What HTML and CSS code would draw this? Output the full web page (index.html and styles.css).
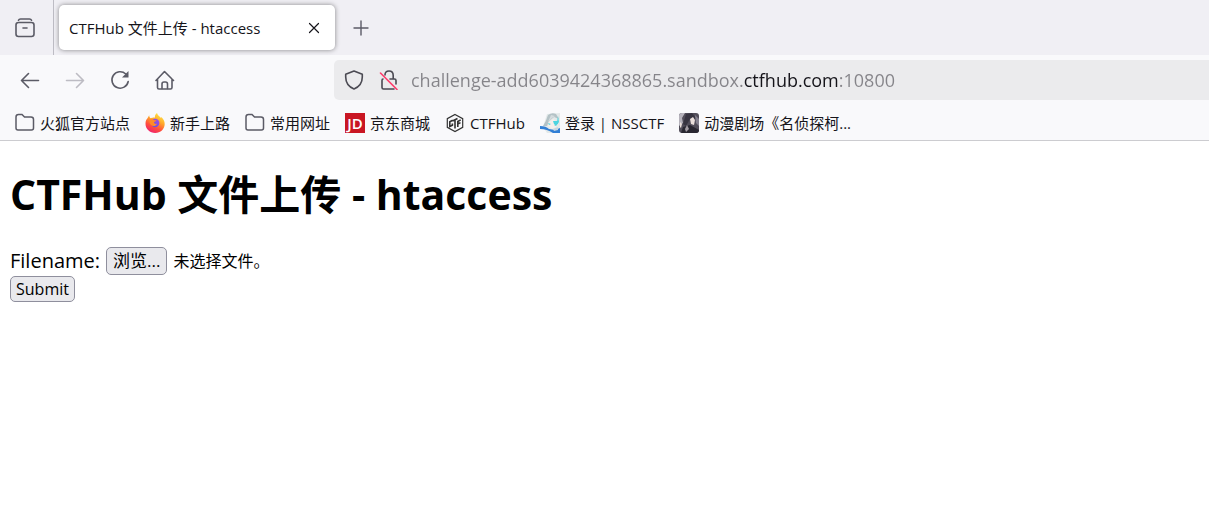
FILE: index.html
```html
<!DOCTYPE html>
<html lang="zh-CN">
<head>
<meta charset="utf-8">
<title>CTFHub 文件上传 - htaccess</title>
<link rel="stylesheet" href="styles.css">
</head>
<body>
<header class="browser">
  <div class="tabstrip">
    <div class="tabview">
      <button class="icon-btn" aria-label="Firefox View">
        <svg class="icon" viewBox="0 0 20 20"><path d="M3.500 2.200Q4 1 5.500 1h9q1.500 0 2 1.200"/><rect x="1" y="4.500" width="18" height="14" rx="2.500"/><path d="M8 10h4"/></svg>
      </button>
    </div>
    <div class="tab">
      <span class="tab-title">CTFHub 文件上传 - htaccess</span>
      <button class="icon-btn tab-close" aria-label="关闭标签页">
        <svg class="icon icon-close" viewBox="0 0 12 12"><path d="M1.500 1.500l9 9M10.500 1.500l-9 9"/></svg>
      </button>
    </div>
    <button class="icon-btn new-tab" aria-label="新建标签页">
      <svg class="icon icon-plus" viewBox="0 0 16 16"><path d="M8 1v14M1 8h14"/></svg>
    </button>
  </div>

  <nav class="toolbar">
    <div class="nav-buttons">
      <button class="icon-btn" aria-label="后退"><svg class="icon" viewBox="0 0 20 20"><path d="M18.500 10.500h-17M8.500 3.500l-7 7 7 7"/></svg></button>
      <button class="icon-btn" aria-label="前进" disabled><svg class="icon" viewBox="0 0 20 20"><path d="M1.500 10.500h17M11.500 3.500l7 7-7 7"/></svg></button>
      <button class="icon-btn" aria-label="刷新"><svg class="icon" viewBox="0 0 20 20"><path d="M18.200 11.500A8.200 8.200 0 1 1 15.800 4"/><path class="solid" d="M18.500 1v6.500H12z"/></svg></button>
      <button class="icon-btn" aria-label="主页"><svg class="icon" viewBox="0 0 20 20"><path d="M1 10.500L9.500 1.500l9 9M2.500 9v8.500q0 1.500 1.500 1.500h11.500q1.500 0 1.500-1.500V9"/><path d="M7 18.500V14q0-2 2-2h1.500q2 0 2 2v4.500"/></svg></button>
    </div>
    <div class="urlbar">
      <svg class="icon" viewBox="0 0 20 20"><path d="M10 1l8.300 3.200V7c0 5.500-3.500 10-8.300 12C5.200 17 1.700 12.500 1.700 7V4.200z"/></svg>
      <svg class="icon" viewBox="0 0 20 20"><path d="M6 5q0-4 4-4 4.200 0 4.200 4.500V9M11 9h4.500Q17 9 17 10.500V14M4 9q-1 0-1 1.500v7Q3 19 4.500 19H15"/><path class="strike" d="M1.500 3l16.500 16.500"/></svg>
      <input class="url" type="text" aria-label="地址" spellcheck="false" value="challenge-add6039424368865.sandbox.ctfhub.com:10800">
    </div>
  </nav>

  <nav class="bookmarks">
    <a class="bookmark" href="#"><svg class="favicon" viewBox="0 0 20 20"><path class="folder" d="M1 15V4Q1 1.500 3.500 1.500H7L9.500 4h6.500q2.500 0 2.500 2.500V15q0 2-2 2H3q-2 0-2-2z"/></svg>火狐官方站点</a>
    <a class="bookmark" href="#"><svg class="favicon" viewBox="0 0 20 20">
      <defs>
        <linearGradient id="flame" x1=".8" y1="0" x2=".3" y2="1"><stop offset="0" stop-color="#fff04a"/><stop offset=".4" stop-color="#ffa52a"/><stop offset=".7" stop-color="#ff4f3c"/><stop offset="1" stop-color="#ef206f"/></linearGradient>
        <linearGradient id="globe" x1="1" y1="0" x2="0" y2="1"><stop offset="0" stop-color="#a34bea"/><stop offset="1" stop-color="#5956d8"/></linearGradient>
      </defs>
      <path fill="url(#flame)" d="M4.200 2.200C4.200 4 5 5 6 5.200 8 4.200 9 4.500 10 4.500c-.5-1.500.5-3.500 2-4.500.5 2.500 2.500 3 4 5l.5-1c2 2.500 3.200 4 3.200 7 0 5-4.200 9-9.500 9S.5 16 .5 10.800C.5 8 1.500 6 2.300 5.500z"/>
      <circle cx="10.200" cy="10" r="4.200" fill="url(#globe)"/>
      <path fill="#ff8b27" d="M5 6.500c2-.8 3-.2 4.500.8h2c-.3 1.200-1.800 1.200-2.500 2 .2 1.700 2 1.900 3 1.200-.5 2.500-4 3.500-6 1.500C4.500 10.500 4 8 5 6.500z"/>
    </svg>新手上路</a>
    <a class="bookmark" href="#"><svg class="favicon" viewBox="0 0 20 20"><path class="folder" d="M1 15V4Q1 1.500 3.500 1.500H7L9.500 4h6.500q2.500 0 2.500 2.500V15q0 2-2 2H3q-2 0-2-2z"/></svg>常用网址</a>
    <a class="bookmark" href="#"><svg class="favicon" viewBox="0 0 20 20"><rect width="20" height="20" fill="#c91623"/><text class="jd" x="10" y="16" text-anchor="middle">JD</text></svg>京东商城</a>
    <a class="bookmark" href="#"><svg class="favicon" viewBox="0 0 20 20"><path class="hex" d="M10 1.500l7.700 4.200v8.600L10 18.500l-7.700-4.200V5.700z"/><path class="hex-mark" d="M7.700 7.200L4.800 8.800v4.700l2.600-1.300v-1.700M7.500 8l5-2.500M10 7v8.500M12.800 14V8.500l2.900-1.600M12.800 11l2.700-1.400"/></svg>CTFHub</a>
    <a class="bookmark" href="#"><svg class="favicon" viewBox="0 0 20 20">
      <path fill="#e3e9e9" d="M7 1l13-1v20H7l-4-6z"/>
      <path fill="#b4c2c6" d="M8 2Q12-1 16 1l3 5-5-2-5 4-2 5H3q3-4 5-11z"/>
      <path fill="#d5dcde" d="M11 2l4 1-3 2-4 4z"/>
      <path fill="#f6eeea" d="M8 10l5-4 4 3-1 5-4 2-4-3z"/>
      <path fill="#4cd4e0" d="M18 3l1 6-3 4-2-1 3-3zM13 8h5v3h-4zM8 10l3 1-2 1z"/>
      <path fill="#327fd5" d="M0 13q6 0 9 3l6 1 5-2v5h-7Q7 16 0 16z"/>
      <path fill="#c8d5df" d="M13 16l5-2v3l-4 1z"/>
    </svg>登录 | NSSCTF</a>
    <a class="bookmark" href="#"><svg class="favicon favicon-round" viewBox="0 0 20 20">
      <rect width="20" height="20" fill="#514d59"/>
      <path fill="#b5b2bb" d="M0 0h6L3 5l1 5-4 3z"/>
      <path fill="#373440" d="M7 1l6-1 4 5-2 4-4-3-4 7-3-2z"/>
      <path fill="#eadfdb" d="M11 6l3-2 2 3-1 5-3-1zM1 9l2 2-1 4-1-1z"/>
      <path fill="#85818f" d="M16 2l4 4v7l-3-3z"/>
      <path fill="#292731" d="M4 14l7-2 9 5v3H2z"/>
      <path fill="#a29ca3" d="M8 12l2 4-3 3-1-3z"/>
    </svg>动漫剧场《名侦探柯...</a>
  </nav>
</header>

<main class="page">
  <h1 class="heading">CTFHub 文件上传 - htaccess</h1>
  <form class="upload">
    <div class="file-row">
      <label for="file">Filename:</label>
      <div class="file-picker">
        <input class="file-input" type="file" id="file">
        <label class="button" for="file">浏览...</label>
        <span>未选择文件。</span>
      </div>
    </div>
    <button class="button" type="submit">Submit</button>
  </form>
</main>
</body>
</html>
```
FILE: styles.css
```css
* {
  box-sizing: border-box;
}

body {
  margin: 0;
  background: #fff;
  color: #000;
  font-family: "Open Sans", "Noto Sans CJK SC", sans-serif;
}

.browser {
  border-bottom: 1px solid #ccccd0;
  background: #f9f9fb;
  color: #15141a;
  font-size: 15px;
  line-height: 20px;
}

.icon-btn {
  display: flex;
  padding: 0;
  border: 0;
  background: none;
  color: #5b5b66;
}

.icon-btn:disabled {
  color: #bdbcc3;
}

.icon {
  flex: none;
  width: 20px;
  height: 20px;
  fill: none;
  stroke: currentColor;
  stroke-width: 1.6;
  stroke-linecap: round;
  stroke-linejoin: round;
}

.icon .solid {
  fill: currentColor;
  stroke: none;
}

.icon .strike {
  stroke: #ff3b6b;
}

.tabstrip {
  display: flex;
  height: 55px;
  background: #f0eff4;
}

.tabview {
  display: flex;
  align-items: center;
  padding: 0 18px 0 15px;
  border-right: 1px solid #bdbcc4;
}

.tab {
  display: flex;
  align-items: center;
  justify-content: space-between;
  width: 276px;
  margin: 5px;
  padding: 0 15px 0 10px;
  border-radius: 5px;
  background: #fff;
  box-shadow: 0 0 5px rgba(0, 0, 0, 0.45);
}

.tab-close {
  color: #15141a;
}

.icon-close {
  width: 12px;
  height: 12px;
  stroke-width: 1.2;
}

.new-tab {
  align-items: center;
  margin-left: 13px;
}

.icon-plus {
  width: 16px;
  height: 16px;
  stroke-width: 1.4;
}

.toolbar {
  display: flex;
  align-items: center;
  padding: 5px 0;
}

.nav-buttons {
  display: flex;
  flex: none;
  gap: 25px;
  width: 334px;
  padding-left: 20px;
}

.urlbar {
  display: flex;
  flex: 1;
  align-items: center;
  gap: 15px;
  height: 40px;
  padding-left: 10px;
  border-radius: 5px 0 0 5px;
  background: #ebebed;
  color: #4b4a53;
}

.url {
  flex: 1;
  min-width: 0;
  margin-left: -3px;
  padding: 0;
  border: 0;
  outline: 0;
  background: linear-gradient(90deg, #858489 333px, #15141a 333px, #15141a 428px, #858489 428px);
  background-clip: text;
  color: transparent;
  font: inherit;
  font-size: 18px;
  line-height: 24px;
}

.bookmarks {
  display: flex;
  align-items: center;
  gap: 15px;
  height: 35px;
  padding: 0 15px;
}

.bookmark {
  display: flex;
  align-items: center;
  gap: 5px;
  color: inherit;
  text-decoration: none;
  white-space: nowrap;
}

.favicon {
  flex: none;
  width: 20px;
  height: 20px;
}

.favicon-round {
  border-radius: 3px;
}

.folder {
  fill: none;
  stroke: #5b5b66;
  stroke-width: 1.5;
}

.jd {
  fill: #fff;
  font-family: "Open Sans", sans-serif;
  font-size: 15px;
  font-weight: 600;
}

.hex,
.hex-mark {
  fill: none;
  stroke: #333;
  stroke-width: 1.2;
}

.hex-mark {
  stroke-width: 1.6;
}

.page {
  padding: 26px 10px;
  font-size: 20px;
  line-height: 28px;
}

.heading {
  margin: 0 0 26px;
  font-size: 41px;
  line-height: 54px;
}

.upload {
  display: flex;
  flex-direction: column;
  align-items: flex-start;
  gap: 1px;
}

.file-row,
.file-picker {
  display: flex;
  align-items: center;
  gap: 6px;
}

.file-picker {
  position: relative;
  font-size: 16px;
}

.file-input {
  position: absolute;
  inset: 0;
  width: 100%;
  opacity: 0;
}

.button {
  padding: 1px 5px;
  border: 1px solid #8f8f9d;
  border-radius: 5px;
  background: #e9e9ed;
  color: #000;
  font-family: inherit;
  font-size: 16px;
  line-height: 22px;
}

.file-picker .button {
  padding: 1px 6px;
  font-size: 17px;
  line-height: 24px;
}
```
